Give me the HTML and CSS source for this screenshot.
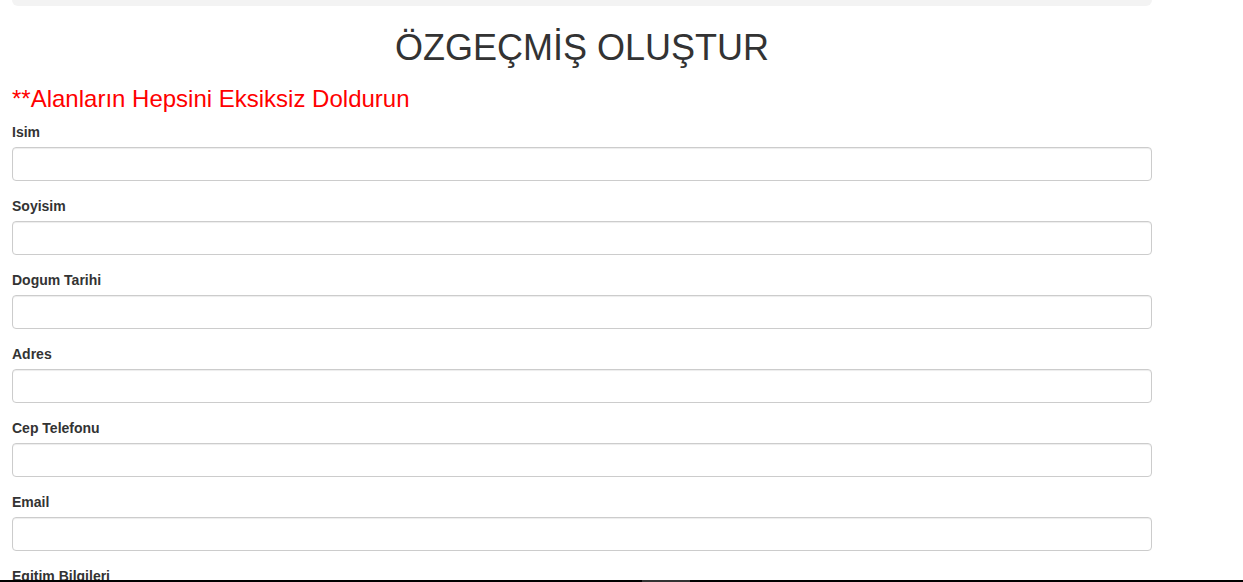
FILE: index.html
```html
<!DOCTYPE html>
<html lang="tr">
<head>
<meta charset="utf-8">
<title>Özgeçmiş Oluştur</title>
<link rel="stylesheet" href="styles.css">
</head>
<body>
<div class="container">
  <div class="well"></div>
  <h1 class="title">ÖZGEÇMİŞ OLUŞTUR</h1>
  <h3 class="warning">**Alanların Hepsini Eksiksiz Doldurun</h3>
  <form class="form">
    <div class="form-group"><label class="label">Isim</label><input class="input" type="text"></div>
    <div class="form-group"><label class="label">Soyisim</label><input class="input" type="text"></div>
    <div class="form-group"><label class="label">Dogum Tarihi</label><input class="input" type="text"></div>
    <div class="form-group"><label class="label">Adres</label><input class="input" type="text"></div>
    <div class="form-group"><label class="label">Cep Telefonu</label><input class="input" type="text"></div>
    <div class="form-group"><label class="label">Email</label><input class="input" type="text"></div>
    <div class="form-group"><label class="label">Egitim Bilgileri</label><input class="input" type="text"></div>
  </form>
</div>
<div class="taskbar"><span class="taskbar-item"></span></div>
</body>
</html>
```
FILE: styles.css
```css
html, body {
  margin: 0;
  padding: 0;
  background: #fff;
}
body {
  font-family: "Liberation Sans", Arial, sans-serif;
  font-size: 14px;
  line-height: 20px;
  color: #333;
}
.container {
  width: 1140px;
  margin-left: 12px;
}
.well {
  height: 6px;
  background: #f3f3f3;
  border-radius: 0 0 6px 6px;
}
.title {
  margin: 22px 0 0;
  font-size: 36px;
  line-height: 39.6px;
  font-weight: 500;
  text-align: center;
  color: #333;
}
.warning {
  margin: 18px 0 10px;
  font-size: 24px;
  line-height: 26.4px;
  font-weight: 500;
  color: #ff0000;
}
.form {
  margin: 0;
}
.form-group {
  display: flex;
  flex-direction: column;
  margin-bottom: 15px;
}
.label {
  display: block;
  font-weight: bold;
  font-size: 14px;
  line-height: 20px;
  margin-bottom: 5px;
  color: #333;
}
.input {
  box-sizing: border-box;
  width: 100%;
  height: 34px;
  margin: 0;
  padding: 6px 12px;
  border: 1px solid #ccc;
  border-radius: 4px;
  background: #fff;
  box-shadow: inset 0 1px 1px rgba(0, 0, 0, 0.075);
  font-family: inherit;
  font-size: 14px;
}
.taskbar {
  position: fixed;
  left: 0;
  right: 0;
  bottom: 0;
  height: 2px;
  background: #000;
}
.taskbar-item {
  position: absolute;
  left: 642px;
  width: 48px;
  top: 0;
  bottom: 0;
  background: #333;
}
```
